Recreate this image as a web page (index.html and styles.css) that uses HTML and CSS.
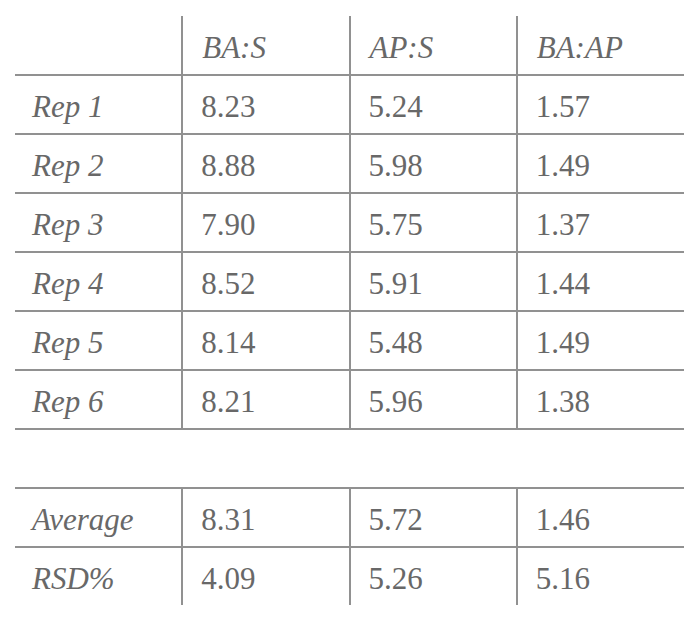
FILE: index.html
```html
<!DOCTYPE html>
<html lang="en">

<head>
  <meta charset="UTF-8" />
  <meta name="viewport" content="width=device-width, initial-scale=1.0" />
  <title>Ratio replicates</title>
  <link rel="stylesheet" href="styles.css">
</head>

<body>
  <table class="ratios">
    <thead>
      <tr class="head">
        <th></th>
        <th>BA:S</th>
        <th>AP:S</th>
        <th>BA:AP</th>
      </tr>
    </thead>
    <tbody>
      <tr>
        <th>Rep 1</th>
        <td>8.23</td>
        <td>5.24</td>
        <td>1.57</td>
      </tr>
      <tr>
        <th>Rep 2</th>
        <td>8.88</td>
        <td>5.98</td>
        <td>1.49</td>
      </tr>
      <tr>
        <th>Rep 3</th>
        <td>7.90</td>
        <td>5.75</td>
        <td>1.37</td>
      </tr>
      <tr>
        <th>Rep 4</th>
        <td>8.52</td>
        <td>5.91</td>
        <td>1.44</td>
      </tr>
      <tr>
        <th>Rep 5</th>
        <td>8.14</td>
        <td>5.48</td>
        <td>1.49</td>
      </tr>
      <tr>
        <th>Rep 6</th>
        <td>8.21</td>
        <td>5.96</td>
        <td>1.38</td>
      </tr>
      <tr class="spacer">
        <td colspan="4"></td>
      </tr>
      <tr class="stat">
        <th>Average</th>
        <td>8.31</td>
        <td>5.72</td>
        <td>1.46</td>
      </tr>
      <tr class="stat last">
        <th>RSD%</th>
        <td>4.09</td>
        <td>5.26</td>
        <td>5.16</td>
      </tr>
    </tbody>
  </table>
</body>

</html>
```

FILE: styles.css
```css
body {
  margin: 0;
  padding: 16px 0 0 15px;
  background: #fff;
  font-family: "Liberation Serif", "Times New Roman", serif;
  color: #686868;
}

.ratios {
  border-collapse: collapse;
  width: 669px;
  table-layout: fixed;
  font-size: 31px;
}

.ratios th,
.ratios td {
  height: 52px;
  padding: 5px 0 0 18px;
  text-align: left;
  font-weight: normal;
  border-bottom: 2px solid #919191;
  border-left: 2px solid #919191;
}

.ratios th {
  font-style: italic;
  padding-left: 17px;
}

.ratios tr > :first-child {
  border-left: none;
}

.ratios .head th {
  height: 53px;
}

.ratios .head th:not(:first-child) {
  padding-left: 19px;
}

.ratios .spacer td {
  border: none;
  height: 52px;
}

.ratios .stat th,
.ratios .stat td {
  border-top: 2px solid #919191;
}

.ratios .last th,
.ratios .last td {
  border-bottom: none;
}
```
